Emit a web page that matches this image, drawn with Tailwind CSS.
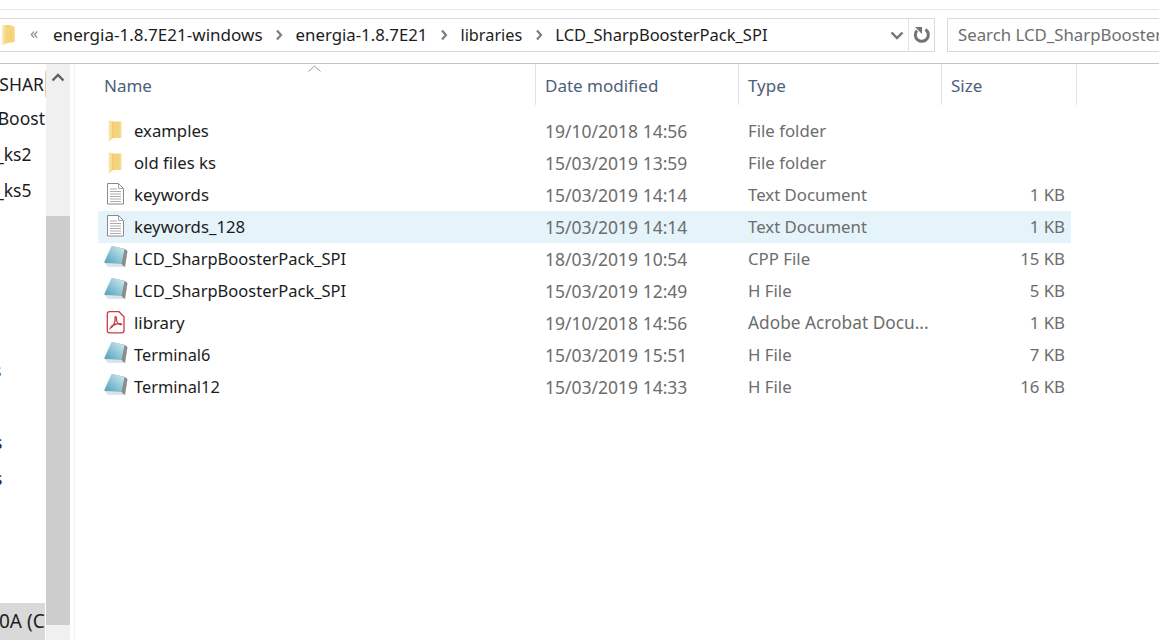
<!DOCTYPE html>
<html>
<head>
<meta charset="utf-8">
<script src="https://cdn.jsdelivr.net/npm/@tailwindcss/browser@4"></script>
</head>
<body class="w-[1159px] h-[640px] overflow-hidden bg-white font-['Noto_Sans','Open_Sans',sans-serif] text-[16.8px] text-[#1c1c1c]">
<svg width="0" height="0" class="absolute">
  <defs>
    <linearGradient id="fold" x1="0" x2="1" y1="0" y2="0"><stop offset="0" stop-color="#fbeebd"/><stop offset=".3" stop-color="#f5d67f"/><stop offset=".8" stop-color="#f3d27a"/><stop offset="1" stop-color="#f7e3a4"/></linearGradient>
    <linearGradient id="pad" x1="0" x2="1" y1="1" y2="0"><stop offset="0" stop-color="#4f9dbc"/><stop offset=".6" stop-color="#9bcfdc"/><stop offset="1" stop-color="#d6edf0"/></linearGradient>
    <symbol id="folder" viewBox="0 0 30 24"><path d="M4.500 1 L9 2.500 H17.500 V19 H9 L5 23 Q4.500 23 4.500 22 Z" fill="url(#fold)"/><path d="M9 2.500 V19" stroke="#edc765" stroke-width="1"/></symbol>
    <symbol id="doc" viewBox="0 0 30 24"><path d="M3.500 .5 H14.500 L19.500 5.500 V21 H3.500 Z" fill="#fff" stroke="#8b8b8b"/><path d="M14.500 .5 V5.500 H19.500" fill="none" stroke="#a9a9a9"/><path d="M6 6 H13 M6 8.500 H17 M6 11 H17 M6 13.500 H17 M6 16 H17 M6 18.500 H17" stroke="#aeaeae"/></symbol>
    <symbol id="pad-i" viewBox="0 0 30 24"><path d="M7.500 0 L21 3 L23.500 5 L21 21 L18 20 Z" fill="#8a8c8c"/><path d="M1 17 L17.500 18 L20.500 21 L4 21 Z" fill="#dfe3e5"/><path d="M7.500 0 L20.500 3 L17.500 18 L1 17 Q0 16.500 .500 15.500 Z" fill="url(#pad)"/></symbol>
    <symbol id="pdf" viewBox="0 0 30 24"><path d="M5.500 .7 H15 L20 5.700 V19.500 Q20 21.800 17.700 21.800 H5.500 Q3.300 21.800 3.300 19.500 V3 Q3.300 .7 5.500 .7 Z" fill="#fff" stroke="#cf3a40" stroke-width="1.300"/><path d="M6.500 17 C9.500 15 11.500 11 11 7 C10.700 5 12.800 5 12.500 8 C12.300 11 14.500 14 17.500 13.500 C18.500 13 15.500 12 12.500 13 C10 13.500 7.500 15 6.500 17 Z" fill="none" stroke="#cf3a40" stroke-width="1.300"/></symbol>
  </defs>
</svg>

<header class="h-[64px] border-b border-[#c4c4c4]">
  <div class="h-[10px] border-b border-[#e6e6e6]"></div>
  <div class="flex items-stretch h-[34px] mt-2">
    <div class="w-[935px] border border-l-0 border-[#d9d9d9] flex items-center">
      <svg class="w-[16px] h-[22px]" viewBox="0 0 16 22"><path d="M2 1 H10 L15 3 V18 L8 19 L2 21 Z" fill="url(#fold)"/></svg>
      <span class="ml-[14px] w-[23px] text-[16px] leading-none text-[#8a8a8a] -translate-y-[2px]">«</span>
      <span class="text-[17.050px]">energia-1.8.7E21-windows</span>
      <svg class="w-[8px] h-[12px] mx-[12.500px]" viewBox="0 0 8 12"><path d="M2 1.500 L6 6 L2 10.500" fill="none" stroke="#7d7d7d" stroke-width="2.200"/></svg>
      <span>energia-1.8.7E21</span>
      <svg class="w-[8px] h-[12px] mx-[12.500px]" viewBox="0 0 8 12"><path d="M2 1.500 L6 6 L2 10.500" fill="none" stroke="#7d7d7d" stroke-width="2.200"/></svg>
      <span class="text-[16.300px]">libraries</span>
      <svg class="w-[8px] h-[12px] mx-[12.500px]" viewBox="0 0 8 12"><path d="M2 1.500 L6 6 L2 10.500" fill="none" stroke="#7d7d7d" stroke-width="2.200"/></svg>
      <span class="text-[16.500px]">LCD_SharpBoosterPack_SPI</span>
      <div class="ml-auto flex items-stretch self-stretch">
        <div class="w-[22px] flex items-center justify-center">
          <svg class="w-[14px] h-[9px]" viewBox="0 0 14 9"><path d="M1.500 1.500 L7 7 L12.500 1.500" fill="none" stroke="#737373" stroke-width="2.400"/></svg>
        </div>
        <div class="w-[26px] border-l border-[#e2e2e2] flex items-center justify-center">
          <svg class="w-[18px] h-[18px]" viewBox="0 0 18 18"><path d="M12.500 3.500 A6.500 6.500 0 1 1 4 4.500" fill="none" stroke="#737373" stroke-width="3"/><path d="M2 1 H9 V8 Z" fill="#737373"/></svg>
        </div>
      </div>
    </div>
    <div class="ml-3 flex-1 border border-r-0 border-[#d9d9d9] pl-[10px] flex items-center overflow-hidden whitespace-nowrap text-[#6e6e6e]">Search LCD_SharpBooster</div>
  </div>
</header>

<div class="flex h-[576px]">
  <aside class="w-[46px] overflow-hidden whitespace-nowrap flex flex-col text-[17.500px] text-[#1c1c1c]">
    <div class="h-[36px] flex items-center justify-end pt-1"><span class="pr-[1px] border-r border-[#f0c8a0]">SHAR</span></div>
    <div class="h-[36px] flex items-center justify-end"><span class="pr-[1px]">Boost</span></div>
    <div class="h-[36px] flex items-center"><span class="-ml-[4px]">_ks2</span></div>
    <div class="h-[36px] flex items-center"><span class="-ml-[4px]">_ks5</span></div>
    <div class="h-[144px]"></div>
    <div class="h-[36px] flex items-center"><span class="-ml-[7px]">s</span></div>
    <div class="h-[36px]"></div>
    <div class="h-[36px] flex items-center"><span class="-ml-[6px]">s</span></div>
    <div class="h-[36px] flex items-center"><span class="-ml-[6px]">s</span></div>
    <div class="flex-1"></div>
    <div class="h-[37px] w-[45px] bg-[#d9d9d9] flex items-center overflow-hidden"><span class="-ml-[1px] text-[19px]">0A (C</span></div>
  </aside>
  <div class="w-[24px] bg-[#f0f0f0] flex flex-col">
    <div class="h-[152px] pt-[9px] flex justify-center">
      <svg class="w-[14px] h-[9px]" viewBox="0 0 14 9"><path d="M1.500 7.500 L7 2 L12.500 7.500" fill="none" stroke="#5f5f5f" stroke-width="2.400"/></svg>
    </div>
    <div class="h-[409px] bg-[#cdcdcd]"></div>
  </div>
  <div class="w-[4px] bg-white"></div>
  <div class="w-[1px] bg-[#f2f2f2]"></div>

  <main class="flex-1 relative pl-[23px]">
    <svg class="absolute left-[233px] top-[1px] w-[13px] h-[7px]" viewBox="0 0 13 7"><path d="M.5 6.500 L6.500 1 L12.500 6.500" fill="none" stroke="#9a9a9a"/></svg>
    <div class="flex h-[41px] items-center text-[#4c607a] w-[979px] text-[17px]">
      <div class="w-[438px] h-full border-r border-[#e5e5e5] pl-[6px] pt-[2px] flex items-center">Name</div>
      <div class="w-[203px] h-full border-r border-[#e5e5e5] pl-[9px] pt-[2px] flex items-center">Date modified</div>
      <div class="w-[203px] h-full border-r border-[#e5e5e5] pl-[9px] pt-[2px] flex items-center">Type</div>
      <div class="w-[135px] h-full border-r border-[#e5e5e5] pl-[9px] pt-[2px] flex items-center">Size</div>
    </div>
    <div class="mt-[10px] w-[973px]">
      <div class="flex items-center h-[32px]">
        <div class="w-[438px] pl-[6px] flex items-center"><svg class="w-[30px] h-[24px] overflow-visible"><use href="#folder"/></svg><span class="text-[16.700px]">examples</span></div>
        <div class="w-[203px] pl-[9px] text-[17.500px] text-[#6d6d6d]">19/10/2018 14:56</div><div class="w-[203px] pl-[9px] text-[#6d6d6d]">File folder</div><div class="flex-1 pr-[6px] text-right text-[#6d6d6d]"></div>
      </div>
      <div class="flex items-center h-[32px]">
        <div class="w-[438px] pl-[6px] flex items-center"><svg class="w-[30px] h-[24px]"><use href="#folder"/></svg><span class="text-[16.700px]">old files ks</span></div>
        <div class="w-[203px] pl-[9px] text-[17.500px] text-[#6d6d6d]">15/03/2019 13:59</div><div class="w-[203px] pl-[9px] text-[#6d6d6d]">File folder</div><div class="flex-1 pr-[6px] text-right text-[#6d6d6d]"></div>
      </div>
      <div class="flex items-center h-[32px]">
        <div class="w-[438px] pl-[6px] flex items-center"><svg class="w-[30px] h-[24px]"><use href="#doc"/></svg><span>keywords</span></div>
        <div class="w-[203px] pl-[9px] text-[17.500px] text-[#6d6d6d]">15/03/2019 14:14</div><div class="w-[203px] pl-[9px] text-[#6d6d6d]">Text Document</div><div class="flex-1 pr-[6px] text-right text-[#6d6d6d]">1 KB</div>
      </div>
      <div class="flex items-center h-[32px] bg-[#e5f3fb]">
        <div class="w-[438px] pl-[6px] flex items-center"><svg class="w-[30px] h-[24px]"><use href="#doc"/></svg><span>keywords_128</span></div>
        <div class="w-[203px] pl-[9px] text-[17.500px] text-[#6d6d6d]">15/03/2019 14:14</div><div class="w-[203px] pl-[9px] text-[#6d6d6d]">Text Document</div><div class="flex-1 pr-[6px] text-right text-[#6d6d6d]">1 KB</div>
      </div>
      <div class="flex items-center h-[32px]">
        <div class="w-[438px] pl-[6px] flex items-center"><svg class="w-[30px] h-[24px] -translate-y-[1px]"><use href="#pad-i"/></svg><span class="text-[16.500px]">LCD_SharpBoosterPack_SPI</span></div>
        <div class="w-[203px] pl-[9px] text-[17.500px] text-[#6d6d6d]">18/03/2019 10:54</div><div class="w-[203px] pl-[9px] text-[#6d6d6d]">CPP File</div><div class="flex-1 pr-[6px] text-right text-[#6d6d6d]">15 KB</div>
      </div>
      <div class="flex items-center h-[32px]">
        <div class="w-[438px] pl-[6px] flex items-center"><svg class="w-[30px] h-[24px] -translate-y-[1px]"><use href="#pad-i"/></svg><span class="text-[16.500px]">LCD_SharpBoosterPack_SPI</span></div>
        <div class="w-[203px] pl-[9px] text-[17.500px] text-[#6d6d6d]">15/03/2019 12:49</div><div class="w-[203px] pl-[9px] text-[#6d6d6d]">H File</div><div class="flex-1 pr-[6px] text-right text-[#6d6d6d]">5 KB</div>
      </div>
      <div class="flex items-center h-[32px]">
        <div class="w-[438px] pl-[6px] flex items-center"><svg class="w-[30px] h-[24px]"><use href="#pdf"/></svg><span>library</span></div>
        <div class="w-[203px] pl-[9px] text-[17.500px] text-[#6d6d6d]">19/10/2018 14:56</div><div class="w-[203px] pl-[9px] text-[17.300px] text-[#6d6d6d]">Adobe Acrobat Docu...</div><div class="flex-1 pr-[6px] text-right text-[#6d6d6d]">1 KB</div>
      </div>
      <div class="flex items-center h-[32px]">
        <div class="w-[438px] pl-[6px] flex items-center"><svg class="w-[30px] h-[24px] -translate-y-[1px]"><use href="#pad-i"/></svg><span class="text-[16.400px]">Terminal6</span></div>
        <div class="w-[203px] pl-[9px] text-[17.500px] text-[#6d6d6d]">15/03/2019 15:51</div><div class="w-[203px] pl-[9px] text-[#6d6d6d]">H File</div><div class="flex-1 pr-[6px] text-right text-[#6d6d6d]">7 KB</div>
      </div>
      <div class="flex items-center h-[32px]">
        <div class="w-[438px] pl-[6px] flex items-center"><svg class="w-[30px] h-[24px] -translate-y-[1px]"><use href="#pad-i"/></svg><span class="text-[16.400px]">Terminal12</span></div>
        <div class="w-[203px] pl-[9px] text-[17.500px] text-[#6d6d6d]">15/03/2019 14:33</div><div class="w-[203px] pl-[9px] text-[#6d6d6d]">H File</div><div class="flex-1 pr-[6px] text-right text-[#6d6d6d]">16 KB</div>
      </div>
    </div>
  </main>
</div>
</body>
</html>
